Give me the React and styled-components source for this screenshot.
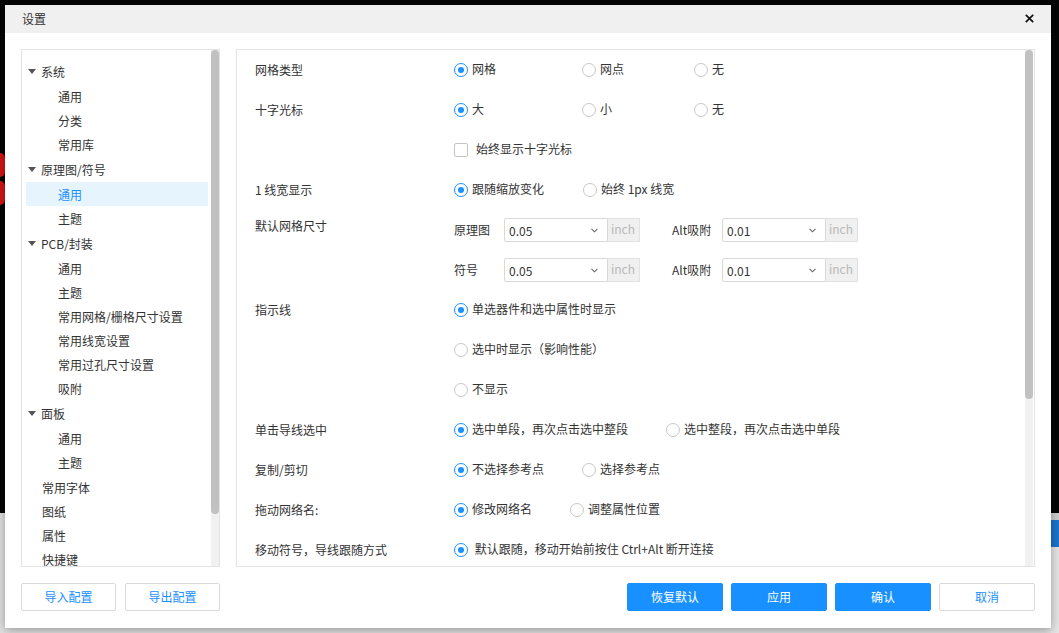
import React from 'react';
import styled, { createGlobalStyle } from 'styled-components';

const Global = createGlobalStyle`
  html, body { margin: 0; padding: 0; overflow: hidden; }
  body { font-family: "Noto Sans CJK SC", "Noto Sans", sans-serif; font-size: 12px; color: #333; }
  * { box-sizing: border-box; }
`;

const Backdrop = styled.div`
  position: relative;
  width: 1059px;
  height: 633px;
  display: flex;
  flex-direction: column;
  overflow: hidden;
  background: #050505;
`;

const BackTop = styled.div`
  flex: 0 0 513px;
  display: flex;
  flex-direction: column;
  padding-top: 153px;
  gap: 4px;
`;

const RedMark = styled.div`
  width: 5px;
  height: 24px;
  background: #d41515;
  border-radius: 0 12px 12px 0;
`;

const BackBottom = styled.div`
  flex: 1;
  display: flex;
  background: #e2e2e2;
`;

const BackFill = styled.div`
  flex: 1;
`;

const RightStrip = styled.div`
  width: 8px;
  background: linear-gradient(to bottom, #cfcfcf 0 7px, #1c74cc 7px 34px, #e6e6e6 34px);
`;

const Dialog = styled.div`
  position: absolute;
  left: 5px;
  top: 5px;
  width: 1046px;
  height: 623px;
  background: #fff;
  box-shadow: 0 2px 10px rgba(0, 0, 0, 0.35);
  display: flex;
  flex-direction: column;
`;

const TitleBar = styled.div`
  height: 28px;
  flex: none;
  background: #f0f0f0;
  display: flex;
  align-items: center;
  justify-content: space-between;
  padding: 0 17px 1px 17px;
  color: #333;
  font-size: 12px;
`;

const CloseBtn = styled.div`
  width: 10px;
  height: 10px;
  display: flex;
  align-items: center;
  justify-content: center;
`;

const Body = styled.div`
  flex: 1;
  display: flex;
  flex-direction: column;
  gap: 16px;
  padding: 16px 16px 0 16px;
`;

const Panels = styled.div`
  height: 518px;
  display: flex;
  gap: 16px;
`;

const Panel = styled.div`
  width: ${(p) => p.$w}px;
  height: 100%;
  border: 1px solid #e3e3e3;
  display: flex;
  overflow: hidden;
`;

const ScrollTrack = styled.div`
  width: 8px;
  flex: none;
  background: #f1f1f1;
  margin-right: ${(p) => p.$mr || 0}px;
`;

const ScrollThumb = styled.div`
  width: 8px;
  height: ${(p) => p.$h}px;
  background: #c1c1c1;
  border-radius: 4px;
`;

const TreeList = styled.div`
  flex: 1;
  padding: 9px 3px 0 4px;
  overflow: hidden;
`;

const TreeRow = styled.div`
  height: ${(p) => (p.$parent ? 25 : 24)}px;
  display: flex;
  align-items: center;
  padding-left: ${(p) => p.$indent}px;
  background: ${(p) => (p.$active ? '#e6f4fd' : 'transparent')};
  color: ${(p) => (p.$active ? '#1890ff' : '#333')};
  white-space: nowrap;
`;

const Caret = styled.span`
  width: 0;
  height: 0;
  border-left: 4px solid transparent;
  border-right: 4px solid transparent;
  border-top: 5px solid #555;
  margin-right: 5px;
`;

const Group = styled.div`
  margin-bottom: 1px;
`;

const Content = styled.div`
  flex: 1;
  padding-left: 18px;
  overflow: hidden;
`;

const FormRow = styled.div`
  display: flex;
  align-items: flex-start;
`;

const Label = styled.div`
  width: 199px;
  flex: none;
  height: ${(p) => p.$h || 40}px;
  padding-bottom: 2px;
  display: flex;
  align-items: center;
  white-space: nowrap;
`;

const Controls = styled.div`
  display: flex;
  flex-direction: ${(p) => (p.$col ? 'column' : 'row')};
`;

const Line = styled.div`
  height: 40px;
  display: flex;
  align-items: center;
`;

const Option = styled.div`
  display: flex;
  align-items: center;
  width: ${(p) => (p.$w ? `${p.$w}px` : 'auto')};
  flex: none;
  white-space: nowrap;
`;

const OptText = styled.span`
  line-height: 16px;
  padding-bottom: 2px;
`;

const RadioCircle = styled.span`
  width: 14px;
  height: 14px;
  border-radius: 50%;
  border: 1px solid ${(p) => (p.$on ? '#1890ff' : '#c8c8c8')};
  display: flex;
  align-items: center;
  justify-content: center;
  margin-right: 4px;
  flex: none;
  &::after {
    content: '';
    width: 6px;
    height: 6px;
    border-radius: 50%;
    background: ${(p) => (p.$on ? '#1890ff' : 'transparent')};
  }
`;

const CheckBox = styled.span`
  width: 14px;
  height: 14px;
  border: 1px solid #c4c4c4;
  border-radius: 2px;
  margin-right: 8px;
  flex: none;
`;

const SmallLabel = styled.div`
  width: 50px;
  flex: none;
  white-space: nowrap;
  padding-bottom: 2px;
`;

const Select = styled.div`
  width: 104px;
  height: 24px;
  border: 1px solid #d9d9d9;
  border-radius: 2px 0 0 2px;
  display: flex;
  align-items: center;
  justify-content: space-between;
  padding: 0 9px 0 4px;
  color: #333;
`;

const Unit = styled.div`
  width: 32px;
  height: 24px;
  background: #f0f0f0;
  border: 1px solid #e2e2e2;
  border-left: none;
  color: #b8b8b8;
  padding-left: 3px;
  line-height: 19px;
  margin-right: ${(p) => p.$mr || 0}px;
`;

const Footer = styled.div`
  height: 28px;
  display: flex;
  justify-content: space-between;
`;

const BtnGroup = styled.div`
  display: flex;
  gap: ${(p) => p.$gap}px;
`;

const Button = styled.div`
  width: ${(p) => p.$w}px;
  height: 28px;
  border-radius: 2px;
  display: flex;
  align-items: center;
  justify-content: center;
  padding-bottom: 2px;
  background: ${(p) => (p.$primary ? '#1890ff' : '#fff')};
  color: ${(p) => (p.$primary ? '#fff' : '#1890ff')};
  border: 1px solid ${(p) => (p.$primary ? '#1890ff' : '#d9d9d9')};
`;

const Chevron = () => (
  <svg width="7" height="5" viewBox="0 0 7 5">
    <polyline points="0.5,0.8 3.5,3.8 6.5,0.8" fill="none" stroke="#666" strokeWidth="1.1" />
  </svg>
);

const Radio = ({ on, w, children }) => (
  <Option $w={w}>
    <RadioCircle $on={on} />
    <OptText>{children}</OptText>
  </Option>
);

const tree = [
  { label: '系统', children: ['通用', '分类', '常用库'] },
  { label: '原理图/符号', children: ['通用', '主题'], active: 0 },
  { label: 'PCB/封装', children: ['通用', '主题', '常用网格/栅格尺寸设置', '常用线宽设置', '常用过孔尺寸设置', '吸附'] },
  { label: '面板', children: ['通用', '主题'] },
  { label: '常用字体' },
  { label: '图纸' },
  { label: '属性' },
  { label: '快捷键' },
];

const SizeRow = ({ name, v1, v2 }) => (
  <Line>
    <SmallLabel>{name}</SmallLabel>
    <Select>
      <span>{v1}</span>
      <Chevron />
    </Select>
    <Unit $mr={32}>inch</Unit>
    <SmallLabel>Alt吸附</SmallLabel>
    <Select>
      <span>{v2}</span>
      <Chevron />
    </Select>
    <Unit>inch</Unit>
  </Line>
);

export default function App() {
  return (
    <>
      <Global />
      <Backdrop>
        <BackTop>
          <RedMark />
          <RedMark />
        </BackTop>
        <BackBottom>
          <BackFill />
          <RightStrip />
        </BackBottom>

        <Dialog>
          <TitleBar>
            <span>设置</span>
            <CloseBtn>
              <svg width="9" height="9" viewBox="0 0 9 9">
                <path d="M0.8 0.8 L8.2 8.2 M8.2 0.8 L0.8 8.2" stroke="#111" strokeWidth="1.7" />
              </svg>
            </CloseBtn>
          </TitleBar>
          <Body>
            <Panels>
              <Panel $w={199}>
                <TreeList>
                  {tree.map((node) =>
                    node.children ? (
                      <Group key={node.label}>
                        <TreeRow $parent $indent={2}>
                          <Caret />
                          {node.label}
                        </TreeRow>
                        {node.children.map((c, i) => (
                          <TreeRow key={c + i} $indent={32} $active={node.active === i}>
                            {c}
                          </TreeRow>
                        ))}
                      </Group>
                    ) : (
                      <TreeRow key={node.label} $indent={16}>
                        {node.label}
                      </TreeRow>
                    )
                  )}
                </TreeList>
                <ScrollTrack>
                  <ScrollThumb $h={464} />
                </ScrollTrack>
              </Panel>

              <Panel $w={799}>
                <Content>
                  <FormRow>
                    <Label>网格类型</Label>
                    <Line>
                      <Radio on w={128}>网格</Radio>
                      <Radio w={112}>网点</Radio>
                      <Radio>无</Radio>
                    </Line>
                  </FormRow>
                  <FormRow>
                    <Label>十字光标</Label>
                    <Line>
                      <Radio on w={128}>大</Radio>
                      <Radio w={112}>小</Radio>
                      <Radio>无</Radio>
                    </Line>
                  </FormRow>
                  <FormRow>
                    <Label />
                    <Line>
                      <Option>
                        <CheckBox />
                        <OptText>始终显示十字光标</OptText>
                      </Option>
                    </Line>
                  </FormRow>
                  <FormRow>
                    <Label>1 线宽显示</Label>
                    <Line>
                      <Radio on w={129}>跟随缩放变化</Radio>
                      <Radio>始终 1px 线宽</Radio>
                    </Line>
                  </FormRow>
                  <FormRow>
                    <Label $h={32}>默认网格尺寸</Label>
                    <Controls $col>
                      <SizeRow name="原理图" v1="0.05" v2="0.01" />
                      <SizeRow name="符号" v1="0.05" v2="0.01" />
                    </Controls>
                  </FormRow>
                  <FormRow>
                    <Label>指示线</Label>
                    <Controls $col>
                      <Line>
                        <Radio on>单选器件和选中属性时显示</Radio>
                      </Line>
                      <Line>
                        <Radio>选中时显示（影响性能）</Radio>
                      </Line>
                      <Line>
                        <Radio>不显示</Radio>
                      </Line>
                    </Controls>
                  </FormRow>
                  <FormRow>
                    <Label>单击导线选中</Label>
                    <Line>
                      <Radio on w={212}>选中单段，再次点击选中整段</Radio>
                      <Radio>选中整段，再次点击选中单段</Radio>
                    </Line>
                  </FormRow>
                  <FormRow>
                    <Label>复制/剪切</Label>
                    <Line>
                      <Radio on w={128}>不选择参考点</Radio>
                      <Radio>选择参考点</Radio>
                    </Line>
                  </FormRow>
                  <FormRow>
                    <Label>拖动网络名:</Label>
                    <Line>
                      <Radio on w={116}>修改网络名</Radio>
                      <Radio>调整属性位置</Radio>
                    </Line>
                  </FormRow>
                  <FormRow>
                    <Label>移动符号，导线跟随方式</Label>
                    <Line>
                      <Radio on>&nbsp;默认跟随，移动开始前按住 Ctrl+Alt 断开连接</Radio>
                    </Line>
                  </FormRow>
                </Content>
                <ScrollTrack $mr={1}>
                  <ScrollThumb $h={349} />
                </ScrollTrack>
              </Panel>
            </Panels>
            <Footer>
              <BtnGroup $gap={9}>
                <Button $w={95}>导入配置</Button>
                <Button $w={95}>导出配置</Button>
              </BtnGroup>
              <BtnGroup $gap={8}>
                <Button $w={96} $primary>恢复默认</Button>
                <Button $w={96} $primary>应用</Button>
                <Button $w={96} $primary>确认</Button>
                <Button $w={96}>取消</Button>
              </BtnGroup>
            </Footer>
          </Body>
        </Dialog>
      </Backdrop>
    </>
  );
}
